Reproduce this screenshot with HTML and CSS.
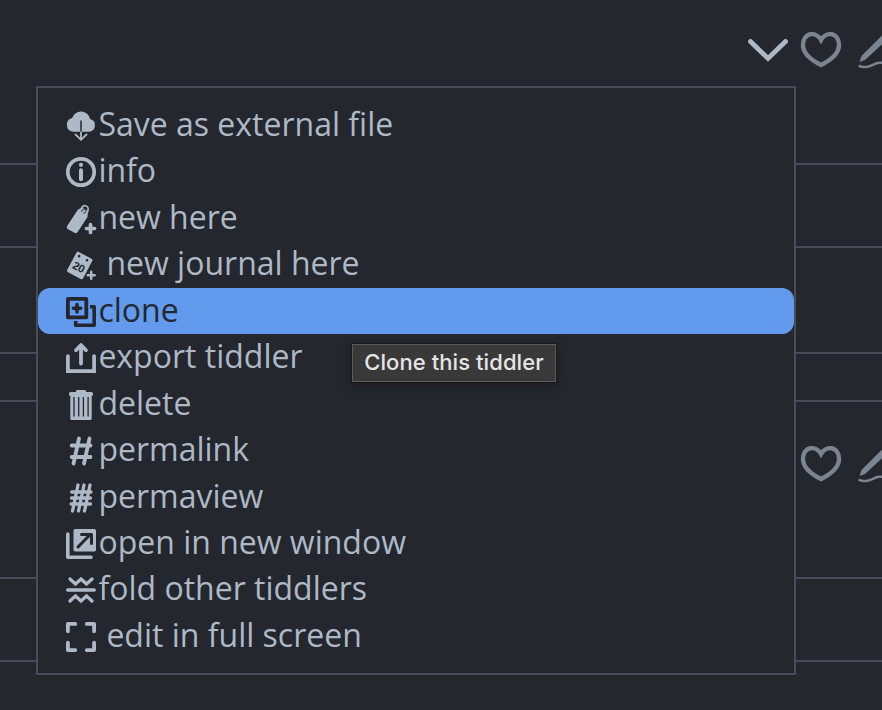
FILE: index.html
```html
<!DOCTYPE html>
<html lang="en">
<head>
<meta charset="utf-8">
<title>Tiddler actions</title>
<link rel="stylesheet" href="styles.css">
</head>
<body>
<svg class="defs" aria-hidden="true">
  <symbol id="heart" viewBox="0 0 42 38"><path d="M21 9C16 0 3 1 3 14c0 8 8 15 18 20 10-5 18-12 18-20C39 1 26 0 21 9Z" fill="none" stroke="currentColor" stroke-width="4.400" stroke-linejoin="miter"/></symbol>
  <symbol id="pen" viewBox="0 0 40 40"><path d="M1.500 32 3.500 26 25 4.500l4.500 4.500L7 30Z" fill="currentColor"/><path d="M.5 35.500c7 4 13-.5 19-2.500 6-1.500 10 2 18 2" fill="none" stroke="currentColor" stroke-width="2.500"/></symbol>
</svg>
<main class="page">
  <section class="band b1">
    <div class="toolbar">
      <svg class="chevron" viewBox="0 0 40 24"><path d="M2.500 2.500 20 19.500 37.500 2.500" fill="none" stroke="currentColor" stroke-width="4.800" stroke-linecap="round"/></svg>
      <svg class="heart"><use href="#heart"/></svg>
      <svg class="pen"><use href="#pen"/></svg>
    </div>
  </section>
  <section class="band b2"></section>
  <section class="band b3"></section>
  <section class="band b4"></section>
  <section class="band b5">
    <div class="toolbar">
      <svg class="heart"><use href="#heart"/></svg>
      <svg class="pen"><use href="#pen"/></svg>
    </div>
  </section>
  <section class="band b6"></section>
</main>
<nav class="menu">
  <a class="item"><svg viewBox="0 0 30 30"><path d="M7 20.700a7 7 0 0 1-.9-13.700A9.300 9.300 0 0 1 24.100 8a6.500 6.500 0 0 1-.6 12.700Z" fill="currentColor"/><path d="M15 9.500v11.200" stroke="#24272e" stroke-width="1.500"/><path d="M15 20.700v8M9 23l6 5.800L21 23" fill="none" stroke="currentColor" stroke-width="1.800"/></svg><span>Save as external file</span></a>
  <a class="item"><svg viewBox="0 0 30 30"><circle cx="15" cy="15" r="13.200" fill="none" stroke="currentColor" stroke-width="3.700"/><circle cx="15" cy="7.800" r="2.100" fill="currentColor"/><path d="M15 13.300v9" stroke="currentColor" stroke-width="4" stroke-linecap="round"/></svg><span>info</span></a>
  <a class="item"><svg viewBox="0 0 30 30"><path d="M12 5.500 16.500 3.500 22 7l-.5 6L12 27.500q-1.500 2.500-3.500 1.300L1.600 25q-1.600-1-.5-3Z" fill="currentColor"/><path d="M15 8c-1-3 1.500-6.700 4.500-6.300s3.500 4 1.500 7" fill="none" stroke="currentColor" stroke-width="1.600"/><path d="M17.500 9c3 1 3-4 .5-4-2 0-2.500 2-2 3" fill="none" stroke="#24272e" stroke-width=".9"/><path d="M24.500 20.500v8M20.500 24.500h8" stroke="currentColor" stroke-width="3.700" stroke-linecap="round"/></svg><span>new here</span></a>
  <a class="item wide"><svg viewBox="0 0 30 30"><g transform="rotate(28 14 15)"><rect x="5" y="4" width="18" height="23" rx="1.800" fill="currentColor"/><circle cx="9" cy="7.500" r="1.300" fill="#24272e"/><circle cx="18" cy="7.500" r="1.300" fill="#24272e"/><text x="14" y="21.300" text-anchor="middle" class="day">20</text></g><path d="M25.200 20.500v9M20.700 25.300h9" stroke="#24272e" stroke-width="4"/><path d="M25.200 21.800v7M21.700 25.300h7" stroke="currentColor" stroke-width="2.500" stroke-linecap="round"/></svg><span>new journal here</span></a>
  <a class="item selected"><svg viewBox="0 0 30 30"><path d="M1.900 1.900h18.400v18.400H1.900Z" fill="none" stroke="currentColor" stroke-width="3.800" stroke-linejoin="round"/><path d="M11 7.500v7.500M7.300 11.200h7.500" stroke="currentColor" stroke-width="3.500" stroke-linecap="round"/><path d="M24 9.700h4.200v18.500H9.700V24" fill="none" stroke="currentColor" stroke-width="3.600" stroke-linejoin="round"/></svg><span>clone</span></a>
  <a class="item"><svg viewBox="0 0 30 30"><path d="M1.900 13v15.200h26.200V13" fill="none" stroke="currentColor" stroke-width="3.700" stroke-linecap="round"/><path d="M15 20.500V3M10 7.200 15 2l5 5.200" fill="none" stroke="currentColor" stroke-width="3.800" stroke-linecap="round" stroke-linejoin="round"/></svg><span>export tiddler</span></a>
  <a class="item"><svg viewBox="0 0 30 30"><path d="M4.700 2h5l1-2h8.600l1 2h5q1.700 0 1.700 1.500V5.500h-1.300V28.500q0 1.500-1.500 1.500H5.800q-1.500 0-1.500-1.500V5.500H3V3.500Q3 2 4.700 2Z" fill="currentColor"/><path d="M8 7v19.500M12.700 7v19.500M17.400 7v19.500M22.100 7v19.500" stroke="#24272e" stroke-width="1.300"/></svg><span>delete</span></a>
  <a class="item"><svg viewBox="0 0 30 30"><path d="M13 2.500 7.500 27.500M23.500 2.500 18 27.500M5.700 9.500h18.800M5.700 21h18.800" stroke="currentColor" stroke-width="3.800" stroke-linecap="round"/></svg><span>permalink</span></a>
  <a class="item"><svg viewBox="0 0 30 30"><path d="M12 2 6.500 28M18 2l-5.500 26M24 2l-5.500 26M5.700 9H25M5.500 15h19M5 21h19.500" stroke="currentColor" stroke-width="3.300" stroke-linecap="round"/></svg><span>permaview</span></a>
  <a class="item"><svg viewBox="0 0 30 30"><path d="M1.800 5v23.200H25" fill="none" stroke="currentColor" stroke-width="3.600" stroke-linecap="round" stroke-linejoin="round"/><rect x="7.500" width="22.500" height="22.500" rx="1.700" fill="currentColor"/><path d="m12 18 11-11.300M15.500 5.500h10v9" fill="none" stroke="#24272e" stroke-width="3" stroke-linecap="round" stroke-linejoin="round"/></svg><span>open in new window</span></a>
  <a class="item"><svg viewBox="0 0 30 30"><path d="M1.800 15h26.400" stroke="currentColor" stroke-width="3.600" stroke-linecap="round"/><path d="M4 4l5.500 5L15 4l5.500 5L26 4M4 26l5.500-5 5.500 5 5.500-5 5.500 5" fill="none" stroke="currentColor" stroke-width="3.400" stroke-linecap="round"/></svg><span>fold other tiddlers</span></a>
  <a class="item wide"><svg viewBox="0 0 30 30"><path d="M1.900 9.300V1.900h7.400M20.700 1.900h7.400v7.400M28.100 20.700v7.400h-7.400M9.300 28.100H1.900v-7.400" fill="none" stroke="currentColor" stroke-width="3.800" stroke-linecap="round" stroke-linejoin="round"/></svg><span>edit in full screen</span></a>
</nav>
<div class="tooltip">Clone this tiddler</div>
</body>
</html>
```
FILE: styles.css
```css
* { box-sizing: border-box; }
body {
  margin: 0;
  height: 710px;
  overflow: hidden;
  background: #24272e;
  color: #adb9c6;
  font-family: "Open Sans", "Noto Sans", sans-serif;
  position: relative;
}
.defs { position: absolute; width: 0; height: 0; }
.page { display: flex; flex-direction: column; }
.band { border-bottom: 2px solid #474c56; flex: none; overflow: hidden; }
.b1 { height: 165px; padding-top: 30px; }
.b2 { height: 83px; }
.b3 { height: 106px; }
.b4 { height: 48px; }
.b5 { height: 177px; padding-top: 42px; }
.b6 { height: 83px; }
.toolbar {
  display: flex;
  justify-content: flex-end;
  align-items: flex-start;
  margin-right: -16px;
  color: #7b8591;
}
.toolbar svg { flex: none; }
.chevron { width: 40px; height: 24px; margin: 9px 12px 0 0; color: #adb9c6; }
.heart { width: 42px; height: 38px; margin: 1px 16px 0 0; }
.pen { width: 40px; height: 40px; }
.menu {
  position: absolute;
  left: 36px;
  top: 86px;
  width: 760px;
  height: 589px;
  border: 2px solid #474c56;
  background: #24272e;
  padding-top: 14px;
}
.item {
  display: flex;
  align-items: flex-start;
  height: 46.45px;
  padding-left: 28px;
  border-radius: 12px;
  font-size: 32px;
  line-height: 44px;
  white-space: nowrap;
}
.item svg { width: 30px; height: 30px; margin: 9px 2.400px 0 0; flex: none; overflow: visible; }
.item.wide svg { margin-right: 10.400px; }
.selected { background: #629aee; color: #24272e; }
.day { font: bold 11px "Liberation Sans", sans-serif; fill: #24272e; }
.tooltip {
  position: absolute;
  left: 351px;
  top: 343px;
  width: 206px;
  height: 40px;
  border: 1px solid #17191c;
  box-shadow: inset 0 0 0 1px #5b5b5b, 0 3px 10px rgba(0, 0, 0, .3);
  background: #393939;
  color: #e5e5e5;
  font: 500 22px/37px Inter, sans-serif;
  letter-spacing: .08px;
  text-align: center;
  white-space: nowrap;
}
```
